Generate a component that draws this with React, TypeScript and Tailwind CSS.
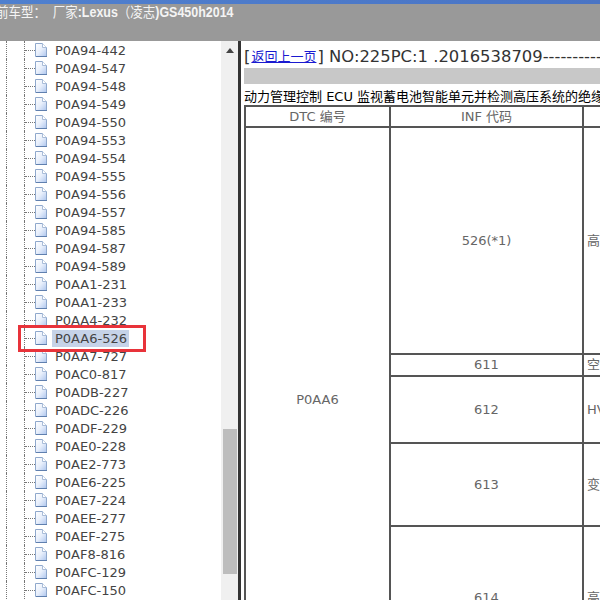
const codes = ["P0A94-442","P0A94-547","P0A94-548","P0A94-549","P0A94-550","P0A94-553","P0A94-554","P0A94-555","P0A94-556","P0A94-557","P0A94-585","P0A94-587","P0A94-589","P0AA1-231","P0AA1-233","P0AA4-232","P0AA6-526","P0AA7-727","P0AC0-817","P0ADB-227","P0ADC-226","P0ADF-229","P0AE0-228","P0AE2-773","P0AE6-225","P0AE7-224","P0AEE-277","P0AEF-275","P0AF8-816","P0AFC-129","P0AFC-150"];

function PageIcon() {
  return (
    <svg width="12" height="14" viewBox="0 0 12 14" className="shrink-0">
      <defs>
        <linearGradient id="pg" x1="0" y1="0" x2="1" y2="1">
          <stop offset="0" stopColor="#ffffff" />
          <stop offset="0.5" stopColor="#e8effb" />
          <stop offset="1" stopColor="#adc5ee" />
        </linearGradient>
      </defs>
      <path d="M0.5 0.5H7.5L11.5 4.5V13.5H0.5Z" fill="url(#pg)" stroke="#8fa8cc" />
      <path d="M7.5 0.5V4.5H11.5" fill="#fff" stroke="#a9bcd8" />
      <path d="M1 13.5H12" stroke="#5f7fae" />
    </svg>
  );
}

function TreeRow({ code }: { code: string }) {
  const selected = code === "P0AA6-526";
  return (
    <div className="flex h-[18px] items-center">
      <div className="ml-[6px] h-full w-[18px] border-l border-dotted border-[#777]" />
      <div className="relative h-full w-[11px] border-l border-dotted border-[#777]">
        <div className="absolute left-0 top-[9px] w-[10px] border-t border-dotted border-[#777]" />
      </div>
      <PageIcon />
      <div className={`ml-[5px] flex h-[17px] items-center pl-[3px] pr-[2px] ${selected ? "bg-[#c6d3e8]" : ""}`}>
        <span className="whitespace-nowrap text-[13px] leading-none text-[#444]">{code}</span>
      </div>
    </div>
  );
}

const cell = "flex items-center justify-center border-b-2 border-[#555] text-[13px] text-[#666]";

export default function App() {
  return (
    <div className="relative flex h-[600px] w-[600px] flex-col overflow-hidden bg-white [font-family:'DejaVu_Sans','Noto_Sans_CJK_SC',sans-serif]">
      <div className="h-[4px] shrink-0 bg-gradient-to-r from-[#4f80cf] to-[#4a74c4]" />
      <div className="h-[37px] shrink-0 overflow-hidden bg-[#999999]">
        <div className="-ml-[4px] origin-left scale-x-[0.89] whitespace-nowrap text-[14px] leading-[17px] text-[#f4f4f4] [font-family:'Liberation_Sans','Noto_Sans_CJK_SC',sans-serif]">
          前车型：&nbsp;&nbsp;厂家<b>:Lexus</b>（凌志<b>)GS450h2014</b>
        </div>
      </div>
      <div className="flex min-h-0 flex-1">
        <div className="h-full w-[221px] shrink-0 overflow-hidden">
          {codes.map((c, i) => (
            <TreeRow key={c + i} code={c} />
          ))}
        </div>
        <div className="flex h-full w-[17px] shrink-0 flex-col items-center bg-[#f0f0f0]">
          <svg width="8" height="5" viewBox="0 0 8 5" className="mt-[7px] shrink-0">
            <path d="M4 0L8 5H0Z" fill="#444" />
          </svg>
          <div className="mt-[376px] h-[145px] w-[14px] bg-[#bdbdbd]" />
        </div>
        <div className="h-full w-[3px] shrink-0 bg-[#333]" />
        <div className="min-w-0 flex-1 overflow-hidden pl-[3px]">
          <div className="flex h-[26px] items-end whitespace-nowrap text-[16.4px] leading-[20px] text-[#333]">
            <span>[</span>
            <a className="ml-[1px] text-[13px] leading-[20px] text-[#1a1ad0] underline">返回上一页</a>
            <span className="ml-[1px]">]&nbsp;NO:225PC:1&nbsp;.2016538709------------</span>
          </div>
          <div className="mt-[1px] h-[16px] bg-[#c8c8c8]" />
          <div className="mt-[4px] whitespace-nowrap text-[13px] leading-[17px] text-black">
            动力管理控制 ECU 监视蓄电池智能单元并检测高压系统的绝缘电阻
          </div>
          <div className="w-[420px] border-l-2 border-t-2 border-[#555]">
            <div className="grid grid-cols-[145px_193px_82px] grid-rows-[21px_227px_22px_67px_83px_144px]">
              <div className={`${cell} border-r-2`}>DTC 编号</div>
              <div className={`${cell} border-r-2`}>INF 代码</div>
              <div className={`${cell} justify-start pl-[3px]`}></div>
              <div className={`${cell} row-span-5 border-r-2 pt-[3px]`}>P0AA6</div>
              <div className={`${cell} border-r-2`}>526(*1)</div>
              <div className={`${cell} justify-start pl-[3px]`}>高压系统绝缘</div>
              <div className={`${cell} border-r-2`}>611</div>
              <div className={`${cell} justify-start pl-[3px]`}>空调系统</div>
              <div className={`${cell} border-r-2`}>612</div>
              <div className={`${cell} justify-start pl-[3px]`}>HV 蓄电池</div>
              <div className={`${cell} border-r-2`}>613</div>
              <div className={`${cell} justify-start pl-[3px]`}>变速器</div>
              <div className={`${cell} border-r-2`}>614</div>
              <div className={`${cell} justify-start pl-[3px]`}>高压系统</div>
            </div>
          </div>
        </div>
      </div>
      <div className="absolute left-[18px] top-[325px] h-[27px] w-[128px] border-[3px] border-[#e8333a]" />
    </div>
  );
}
